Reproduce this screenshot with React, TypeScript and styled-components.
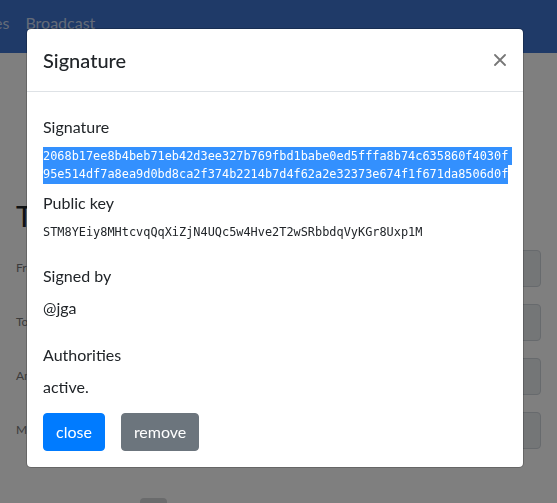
import styled, { createGlobalStyle } from "styled-components";

const SIGNATURE =
  "2068b17ee8b4beb71eb42d3ee327b769fbd1babe0ed5fffa8b74c635860f4030f95e514df7a8ea9d0bd8ca2f374b2214b7d4f62a2e32373e674f1f671da8506d0f";
const PUBLIC_KEY = "STM8YEiy8MHtcvqQqXiZjN4UQc5w4Hve2T2wSRbbdqVyKGr8Uxp1M";

const GlobalStyle = createGlobalStyle`
  * { box-sizing: border-box; }
  html, body {
    margin: 0;
    height: 100%;
    overflow: hidden;
  }
  body {
    background: #fff;
    color: #212529;
    font-family: Lato, "Liberation Sans", sans-serif;
    font-size: 16px;
    line-height: 1.5;
  }
`;

const Page = styled.div`
  min-height: 100vh;
  background: #fff;
`;

const NavBar = styled.nav`
  height: 53px;
  background: #3e74d0;
  padding-top: 11px;
`;

const NavList = styled.div`
  display: flex;
  margin-left: -6px;
`;

const NavLink = styled.a`
  color: rgba(255, 255, 255, 0.72);
  line-height: 24px;
  padding: 0 8px;
  text-decoration: none;
  &:first-child { padding-left: 0; }
`;

const Main = styled.main`
  padding: 0 16px;
`;

const Heading = styled.h3`
  margin: 147px 0 16px;
  font-size: 28px;
  font-weight: 500;
  line-height: 1.2;
`;

const FormRow = styled.div`
  display: grid;
  grid-template-columns: 160px 1fr;
  align-items: center;
  margin-bottom: 17px;
`;

const RowLabel = styled.label`
  font-size: 12px;
  color: #777;
`;

const ReadOnlyInput = styled.div`
  height: 37px;
  background: #e9ecef;
  border: 1px solid #ced4da;
  border-radius: 4px;
`;

const FooterRow = styled.div`
  display: grid;
  grid-template-columns: 112px 27px;
  align-items: start;
  margin-top: 49px;
  padding-left: 12px;
`;

const FooterText = styled.span`
  font-size: 14px;
  line-height: 20px;
`;

const SmallBtn = styled.span`
  height: 24px;
  border-radius: 4px;
  background: #d4d6d9;
`;

const Backdrop = styled.div`
  position: fixed;
  inset: 0;
  background: rgba(0, 0, 0, 0.5);
`;

const Dialog = styled.div`
  position: fixed;
  top: 28px;
  left: 26px;
  width: 498px;
  background: #fff;
  background-clip: padding-box;
  border: 1px solid rgba(0, 0, 0, 0.2);
  border-radius: 5px;
`;

const Header = styled.div`
  display: flex;
  align-items: flex-start;
  justify-content: space-between;
  padding: 16px;
  border-bottom: 1px solid #dee2e6;
`;

const Title = styled.h5`
  margin: 0;
  font-size: 20px;
  font-weight: 500;
  line-height: 30px;
`;

const CloseBtn = styled.button`
  display: flex;
  align-items: center;
  justify-content: center;
  width: 14px;
  height: 30px;
  padding: 0;
  border: none;
  background: none;
  cursor: pointer;
`;

const Body = styled.div`
  padding: 23px 16px 16px;
`;

const Section = styled.div`
  margin-bottom: 23px;
`;

const FieldLabel = styled.div`
  line-height: 24px;
  margin-bottom: 8px;
`;

const FieldValue = styled.div<{ $gap?: number }>`
  line-height: 24px;
  margin-bottom: ${(p) => p.$gap ?? 0}px;
`;

const Mono = styled.div<{ $gap?: number }>`
  font-family: "DejaVu Sans Mono", "Liberation Mono", monospace;
  font-size: 11.9px;
  line-height: 18.3px;
  margin-bottom: ${(p) => p.$gap ?? 0}px;
`;

const HexLine = styled.span`
  display: block;
  width: max-content;
  background: #3390fe;
  color: #fff;
  &:not(:last-child) { padding-right: 4px; }
`;

const ButtonRow = styled.div`
  display: flex;
  gap: 16px;
  margin-top: 14px;
`;

const Btn = styled.button<{ $variant: "primary" | "secondary" }>`
  font-family: inherit;
  font-size: 16px;
  line-height: 24px;
  padding: 6px 12px;
  color: #fff;
  border: 1px solid ${(p) => (p.$variant === "primary" ? "#007bff" : "#6c757d")};
  background: ${(p) => (p.$variant === "primary" ? "#007bff" : "#6c757d")};
  border-radius: 4px;
  cursor: pointer;
`;

function chunk(text: string, size: number) {
  const lines: string[] = [];
  for (let i = 0; i < text.length; i += size) lines.push(text.slice(i, i + size));
  return lines;
}

export default function App() {
  return (
    <>
      <GlobalStyle />
      <Page>
        <NavBar>
          <NavList>
            <NavLink href="#">es</NavLink>
            <NavLink href="#">Broadcast</NavLink>
          </NavList>
        </NavBar>
        <Main>
          <Heading>Transfer</Heading>
          {["From", "To", "Amount", "Memo"].map((label) => (
            <FormRow key={label}>
              <RowLabel>{label}</RowLabel>
              <ReadOnlyInput />
            </FormRow>
          ))}
          <FooterRow>
            <FooterText>Sign</FooterText>
            <SmallBtn />
          </FooterRow>
        </Main>
      </Page>

      <Backdrop />
      <Dialog role="dialog">
        <Header>
          <Title>Signature</Title>
          <CloseBtn aria-label="Close">
            <svg width="12" height="12" viewBox="0 0 12 12">
              <path d="M1 1 L11 11 M11 1 L1 11" stroke="#777" strokeWidth="1.8" strokeLinecap="round" />
            </svg>
          </CloseBtn>
        </Header>
        <Body>
          <Section>
            <FieldLabel>Signature</FieldLabel>
            <Mono $gap={7.4}>
              {chunk(SIGNATURE, 65).map((line) => (
                <HexLine key={line}>{line}</HexLine>
              ))}
            </Mono>
            <FieldLabel>Public key</FieldLabel>
            <Mono>{PUBLIC_KEY}</Mono>
          </Section>
          <Section>
            <FieldLabel>Signed by</FieldLabel>
            <FieldValue>@jga</FieldValue>
          </Section>
          <div>
            <FieldLabel>Authorities</FieldLabel>
            <FieldValue>active.</FieldValue>
          </div>
          <ButtonRow>
            <Btn $variant="primary">close</Btn>
            <Btn $variant="secondary">remove</Btn>
          </ButtonRow>
        </Body>
      </Dialog>
    </>
  );
}
